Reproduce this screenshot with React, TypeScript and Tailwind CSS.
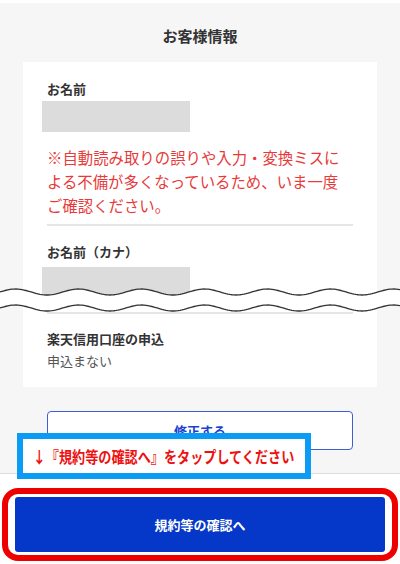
import React from "react";

const font = { fontFamily: '"Noto Sans CJK JP", "Noto Sans", sans-serif' };

// wavy "cut" marker drawn across the card
const Wave = () => {
  const w = 400;
  const period = 63;
  const amp = 3;
  const pts = (c: number) => {
    const out: [number, number][] = [];
    for (let x = 0; x <= w; x += 2) {
      out.push([x, c + amp * Math.cos((2 * Math.PI * (x - 47)) / period)]);
    }
    return out;
  };
  const top = pts(8);
  const bottom = pts(24);
  const line = (p: [number, number][]) =>
    p.map(([x, y], i) => `${i === 0 ? "M" : "L"}${x} ${y.toFixed(2)}`).join(" ");
  const fill =
    line(top) +
    " " +
    [...bottom].reverse().map(([x, y]) => `L${x} ${y.toFixed(2)}`).join(" ") +
    " Z";

  return (
    <svg
      className="absolute left-0 top-[284px]"
      width={400}
      height={32}
      viewBox="0 0 400 32"
    >
      <path d={fill} fill="#ffffff" />
      <path d={line(top)} fill="none" stroke="#333" strokeWidth={1.3} />
      <path d={line(bottom)} fill="none" stroke="#333" strokeWidth={1.3} />
    </svg>
  );
};

const App = () => {
  return (
    <div className="relative w-[400px] h-[564px] overflow-hidden bg-white" style={font}>
      <div className="h-[3px] bg-white" />

      {/* main gray area */}
      <div className="bg-[#f6f6f6] h-[471px] border-b border-[#dcdcdc] pt-[22px]">
        <h1 className="text-center text-[15px] leading-[22px] font-bold text-[#333]">
          お客様情報
        </h1>

        <div className="mx-[23px] mt-[15px] bg-white px-[24px] pt-[17px] pb-[16px]">
          <p className="text-[13px] leading-[20px] font-bold text-[#333]">お名前</p>
          <div className="-ml-[5px] mt-[2px] w-[148px] h-[31px] bg-[#dcdcdc]" />
          <p className="mt-[13px] text-[15.4px] leading-[24px] text-[#e83a3a] whitespace-nowrap">
            ※自動読み取りの誤りや入力・変換ミスに
            <br />
            よる不備が多くなっているため、いま一度
            <br />
            ご確認ください。
          </p>
          <div className="mt-[7px] h-[2px] bg-[#e6e6e6]" />

          <p className="mt-[16px] text-[13px] leading-[20px] font-bold text-[#333]">
            お名前（カナ）
          </p>
          <div className="-ml-[5px] mt-[5px] w-[148px] h-[31px] bg-[#dcdcdc]" />
          <div className="mt-[14px] h-[2px] bg-[#e6e6e6]" />

          <p className="mt-[15px] text-[13px] leading-[20px] font-bold text-[#333]">
            楽天信用口座の申込
          </p>
          <p className="mt-[2px] text-[13px] leading-[20px] text-[#555]">申込まない</p>
        </div>

        <div className="px-[47px] mt-[24px]">
          <button className="w-full h-[39px] rounded-[4px] border border-[#3d5fd6] bg-white text-[13px] font-bold text-[#1c3fd0]">
            修正する
          </button>
        </div>
      </div>

      {/* bottom fixed bar */}
      <div className="px-[15px] pt-[23px]">
        <button className="w-full h-[55px] rounded-[3px] bg-[#0537c8] text-white text-[13px] font-bold">
          規約等の確認へ
        </button>
      </div>

      <Wave />

      {/* annotation overlays */}
      <div className="absolute left-[17px] top-[433px] w-[294px] h-[46px] border-[6px] border-[#0a9cf5] bg-white flex items-center justify-center">
        <span className="inline-block scale-x-[0.82] whitespace-nowrap text-[16px] leading-[20px] font-bold text-[#ee1111]">
          ↓『規約等の確認へ』をタップしてください
        </span>
      </div>
      <div className="absolute left-[2px] top-[488px] w-[396px] h-[73px] border-[6px] border-[#ee0000] rounded-[16px]" />
    </div>
  );
};

export default App;
